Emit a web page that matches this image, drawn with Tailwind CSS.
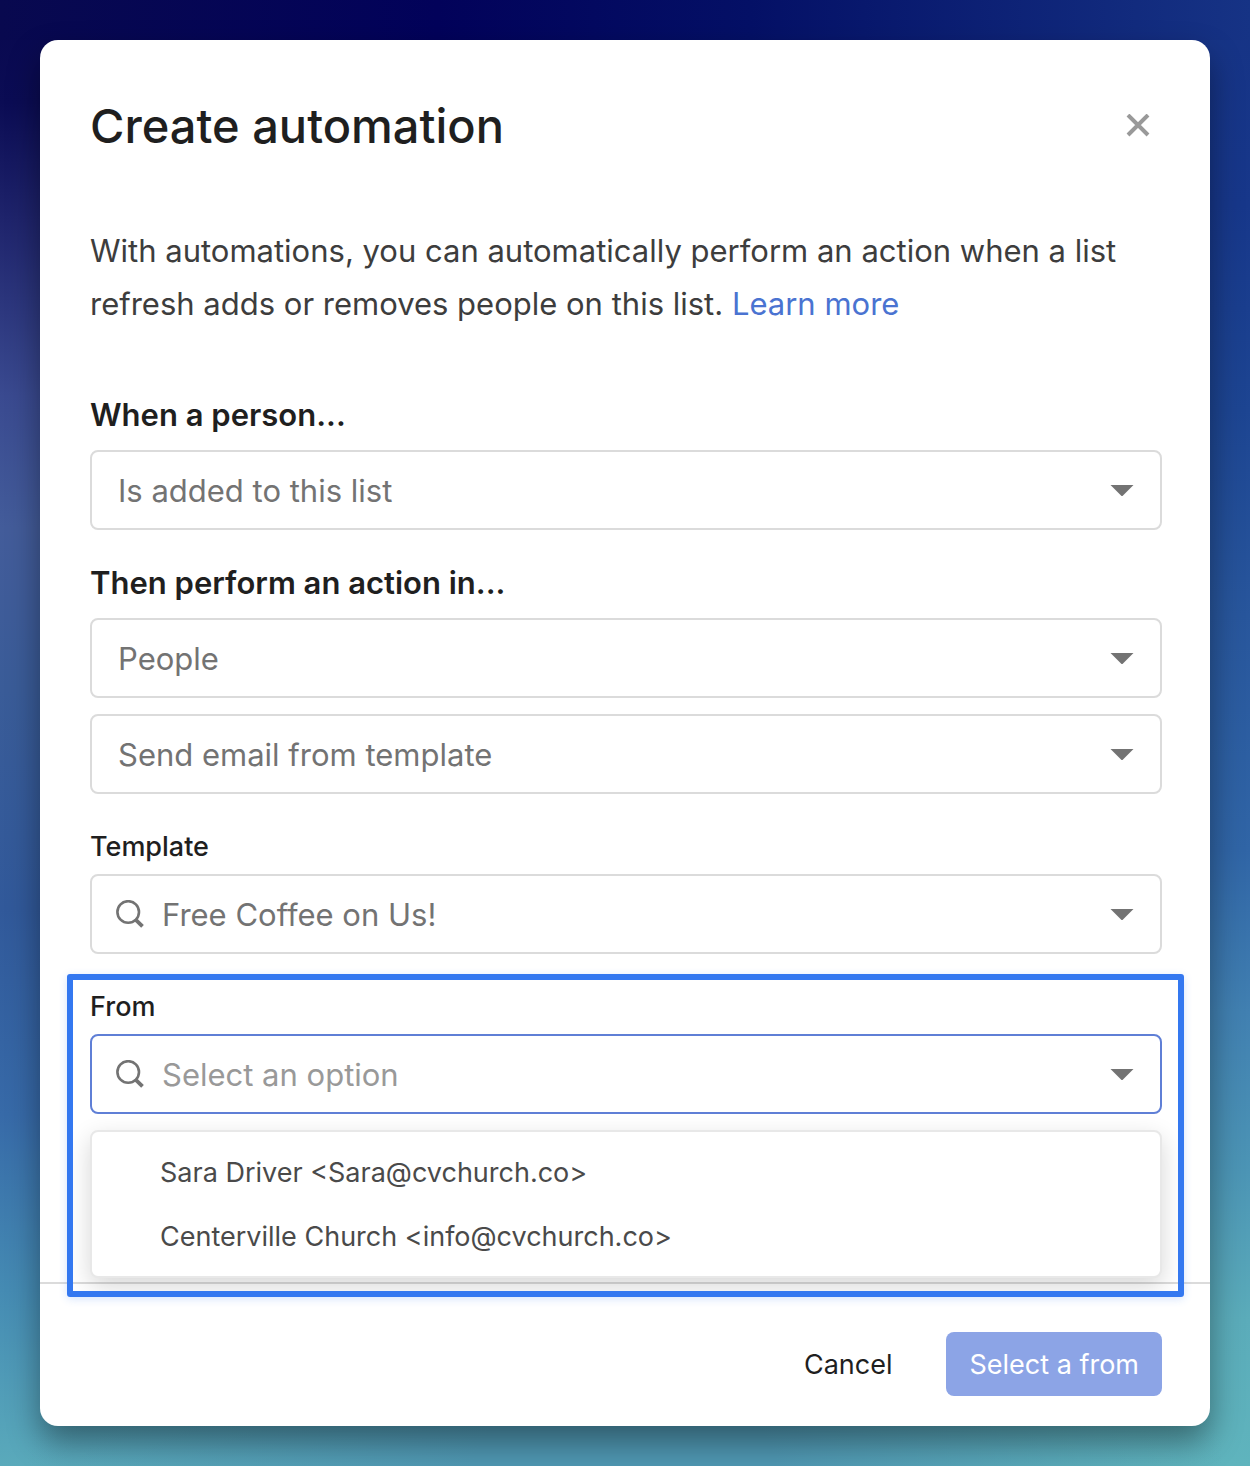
<!DOCTYPE html>
<html lang="en">
<head>
<meta charset="utf-8">
<meta name="viewport" content="width=device-width, initial-scale=1">
<title>Create automation</title>
<script src="https://cdn.jsdelivr.net/npm/@tailwindcss/browser@4"></script>
</head>
<body class="min-h-screen p-10 font-['Inter','Liberation_Sans',sans-serif] text-[#1f1f1f] bg-no-repeat bg-[linear-gradient(90deg,#08094f_0%,#02025a_35%,#041066_60%,#163385_100%),radial-gradient(ellipse_48%_300px_at_50%_100%,#4f97b2_0%,#4f97b2_25%,transparent_100%),linear-gradient(180deg,#08084f_0%,#0b0c54_7%,#1f246c_15%,#3a4a90_27%,#435c9a_36%,#3a5c98_47%,#31599a_62%,#376aa8_76%,#458bb3_88%,#5aaabb_100%),linear-gradient(180deg,#163385_0%,#17378a_14%,#1d4592_28%,#28569c_42%,#3065a6_58%,#4180b1_69%,#4c95b5_80%,#5bacba_90%,#5fb4bd_100%)] bg-size-[100%_40px,100%_100%,50%_100%,50%_100%] bg-position-[0_0,0_0,0_0,100%_0]">
<main role="dialog" aria-labelledby="title" class="rounded-[18px] bg-white shadow-[0_16px_32px_rgba(0,0,0,0.4)]">
  <header class="flex items-center justify-between pt-[50px] pl-[50px] pr-12">
    <h1 id="title" class="text-[47px] leading-[72px] font-medium">Create automation</h1>
    <button type="button" aria-label="Close" class="flex size-12 items-center justify-center">
      <svg class="size-6" viewBox="0 0 24 24" fill="none" stroke="#999" stroke-width="4"><path d="M2 1L22 21M22 1L2 21"/></svg>
    </button>
  </header>
  <form>
    <div class="pt-[62px] pl-[50px] pr-12 pb-[168px]">
      <p class="text-[31px] leading-[53px] text-[#3d3d3d]">With automations, you can automatically perform an action when a list refresh adds or removes people on this list. <a href="#" class="text-[#4a73d1]">Learn more</a></p>

      <div class="mt-[60px]">
        <label for="trigger" class="block text-[31px] leading-[50px] font-semibold">When a person...</label>
        <div class="relative mt-[10px]">
          <select id="trigger" class="h-20 w-full appearance-none rounded-lg border-2 border-[#dbdbdb] bg-white px-[26px] pt-0.5 text-[31px] text-[#737373]"><option>Is added to this list</option></select>
          <svg class="pointer-events-none absolute top-[34px] right-7 h-3 w-6" viewBox="0 0 24 12" fill="#737373"><path d="M0.500 1H23.500L12 12.500Z"/></svg>
        </div>
      </div>

      <div class="mt-7">
        <label for="app" class="block text-[31px] leading-[50px] font-semibold">Then perform an action in...</label>
        <div class="relative mt-[10px]">
          <select id="app" class="h-20 w-full appearance-none rounded-lg border-2 border-[#dbdbdb] bg-white px-[26px] pt-0.5 text-[31px] text-[#737373]"><option>People</option></select>
          <svg class="pointer-events-none absolute top-[34px] right-7 h-3 w-6" viewBox="0 0 24 12" fill="#737373"><path d="M0.500 1H23.500L12 12.500Z"/></svg>
        </div>
        <div class="relative mt-4">
          <select aria-label="Action" class="h-20 w-full appearance-none rounded-lg border-2 border-[#dbdbdb] bg-white px-[26px] pt-0.5 text-[31px] text-[#737373]"><option>Send email from template</option></select>
          <svg class="pointer-events-none absolute top-[34px] right-7 h-3 w-6" viewBox="0 0 24 12" fill="#737373"><path d="M0.500 1H23.500L12 12.500Z"/></svg>
        </div>
      </div>

      <div class="mt-8">
        <label for="template" class="block text-[27px] leading-[42px] font-medium">Template</label>
        <div class="mt-[6px] flex h-20 items-center rounded-lg border-2 border-[#dbdbdb] pr-[26px] pl-6">
          <svg class="size-7 shrink-0" viewBox="0 0 28 28" fill="none" stroke="#737373"><circle cx="12.200" cy="12" r="10.800" stroke-width="2.600"/><path d="M19.300 19.300L26.500 26.300" stroke-width="3.800"/></svg>
          <input id="template" type="text" value="Free Coffee on Us!" class="ml-[18px] min-w-0 flex-1 pt-0.5 text-[31px] text-[#737373] outline-none">
          <svg class="h-3 w-6 shrink-0" viewBox="0 0 24 12" fill="#737373"><path d="M0.500 1H23.500L12 12.500Z"/></svg>
        </div>
      </div>

      <div class="relative mt-8">
        <label for="from" class="block text-[27px] leading-[42px] font-medium">From</label>
        <div class="mt-[6px] flex h-20 items-center rounded-lg border-2 border-[#5f7fd6] pr-[26px] pl-6">
          <svg class="size-7 shrink-0" viewBox="0 0 28 28" fill="none" stroke="#737373"><circle cx="12.200" cy="12" r="10.800" stroke-width="2.600"/><path d="M19.300 19.300L26.500 26.300" stroke-width="3.800"/></svg>
          <input id="from" type="text" role="combobox" aria-expanded="true" aria-controls="from-options" placeholder="Select an option" class="ml-[18px] min-w-0 flex-1 pt-0.5 text-[31px] text-[#737373] outline-none placeholder:text-[#999]">
          <svg class="h-3 w-6 shrink-0" viewBox="0 0 24 12" fill="#737373"><path d="M0.500 1H23.500L12 12.500Z"/></svg>
        </div>
        <div class="pointer-events-none absolute -top-3 -right-[22px] -left-[23px] h-[323px] overflow-hidden rounded-[3px] border-6 border-[#3478f0] shadow-[0_2px_8px_rgba(52,120,240,0.2)]">
          <ul id="from-options" role="listbox" aria-label="From" class="pointer-events-auto mt-[150px] mr-4 ml-[17px] rounded-lg border-2 border-[#e8e8e8] bg-white pt-[9px] pb-[7px] text-[27px] leading-[64px] text-[#4a4a4a] shadow-[0_8px_24px_rgba(0,0,0,0.16)]">
            <li role="option" class="pl-[68px]">Sara Driver &lt;Sara@cvchurch.co&gt;</li>
            <li role="option" class="pl-[68px]">Centerville Church &lt;info@cvchurch.co&gt;</li>
          </ul>
        </div>
      </div>
    </div>
    <footer class="flex items-center justify-end gap-8 border-t-2 border-[#dbdbdb] pt-12 pr-12 pb-[30px]">
      <button type="button" class="h-16 px-[22px] pt-0.5 text-[27px]">Cancel</button>
      <button type="submit" disabled class="h-16 rounded-lg bg-[#8ca4e6] px-[23px] pt-0.5 text-[27px] text-white">Select a from</button>
    </footer>
  </form>
</main>
</body>
</html>
